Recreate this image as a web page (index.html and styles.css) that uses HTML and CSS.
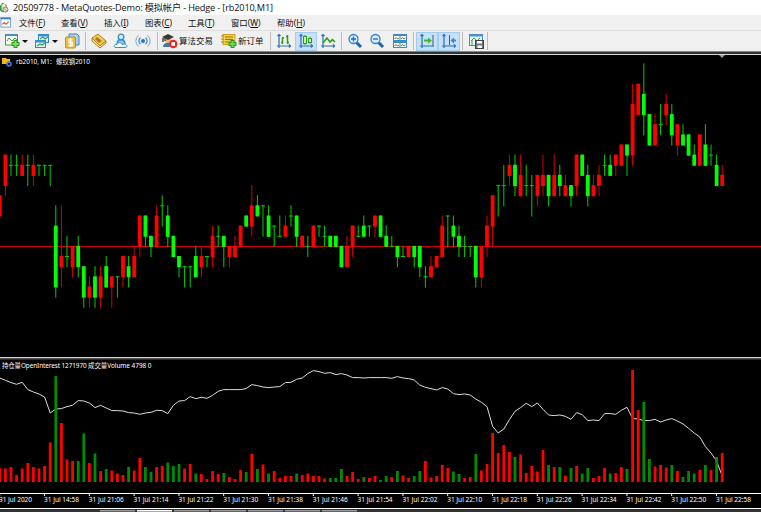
FILE: index.html
```html
<!DOCTYPE html>
<html lang="zh-CN">
<head>
    <meta charset="utf-8">
    <title>20509778 - MetaQuotes-Demo</title>
    <link rel="stylesheet" href="styles.css">
</head>
<body>

<div class="titlebar">
    <svg class="appicon" viewBox="0 0 12 14"><path d="M0 5L3 1l5 3v6l-4 3-4-2z" fill="#3a9c4c"/><path d="M2 4l3-2 3 5-2 5-4-2z" fill="#f5edc0"/><circle cx="6.500" cy="9.500" r="3" fill="#cfe6f5" stroke="#287dba"/><path d="M4 7l5 5" stroke="#c98a10"/></svg>
    <span class="title">20509778 - MetaQuotes-Demo: 模拟帐户 - Hedge - [rb2010,M1]</span>
</div>

<div class="menubar">
    <svg class="menuicon" viewBox="0 0 12 12"><rect x=".5" y="1" width="10.500" height="10" fill="#fff" stroke="#5b9fd6"/><path d="M0 1.500h11" stroke="#3282cc" stroke-width="2"/><path d="M2 8l2-2 2 2 3-3" fill="none" stroke="#e8402a" stroke-width="1.200"/></svg>
    <span>文件(<u>F</u>)</span>
    <span>查看(<u>V</u>)</span>
    <span>插入(<u>I</u>)</span>
    <span>图表(<u>C</u>)</span>
    <span>工具(<u>T</u>)</span>
    <span>窗口(<u>W</u>)</span>
    <span>帮助(<u>H</u>)</span>
</div>

<div class="toolbar">
    <div class="tool first"><svg viewBox="0 0 16 16"><rect x="1.500" y="2" width="12" height="10" fill="#f5fbf2" stroke="#4b9a3c"/><path d="M1 2h13" stroke="#2e7fc2" stroke-width="1.500"/><path d="M3 8l2-3 3 3 3-3 2 2" fill="none" stroke="#4b9a3c"/><path d="M11.500 7v8M7.500 11h8" stroke="#2b9a22" stroke-width="4"/><path d="M11.500 8v6M8.500 11h6" stroke="#7ddb62" stroke-width="2"/></svg></div>
    <div class="caret"></div>
    <div class="tool"><svg viewBox="0 0 16 16"><rect x="4.500" y="1.500" width="10" height="8" fill="#e4f2fb" stroke="#3585c6"/><path d="M4 2.500h11" stroke="#3a8ed4" stroke-width="2"/><rect x="1.500" y="7.500" width="10" height="7" fill="#dff0fb" stroke="#3585c6"/><path d="M1 8.500h11" stroke="#3a8ed4" stroke-width="2"/><path d="M6 6l3-2 2 2 3-2M3 13l3-2 2 1 3-2" fill="none" stroke="#35a43b" stroke-width="1.200"/></svg></div>
    <div class="caret"></div>
    <div class="tool"><svg viewBox="0 0 16 16"><path d="M5 1h8l2 2v9H5z" fill="#a9d3f2" stroke="#3b83bd"/><rect x="1.500" y="4" width="10" height="11" rx="1" fill="#f2be38" stroke="#c98b13"/><path d="M8.500 6.500H5v3h3.500v3H4.500M6.700 5v9" fill="none" stroke="#fff" stroke-width="1.300"/></svg></div>
    <div class="sep"></div>
    <div class="tool"><svg viewBox="0 0 16 16"><path d="M1 5l6-4 8 7-6 5z" fill="#f2cb4f" stroke="#b98416"/><path d="M1 5v3l8 7 6-5V8l-6 5z" fill="#fff0b6" stroke="#a8781e"/><path d="M6 4l5 4-3 2-4-4z" fill="#a77a27"/></svg></div>
    <div class="tool"><svg viewBox="0 0 16 16"><path d="M4 11c0-6 8-6 8 0" fill="#8cc4ee" stroke="#348dd2" stroke-width="1.300"/><circle cx="8" cy="4" r="2.800" fill="#d8eefc" stroke="#348dd2" stroke-width="1.300"/><path d="M3 14.500c-3 0-2-4 1-3 1-3 5-2 5 0 4-2 7 3 3 3z" fill="#eef8fe" stroke="#348dd2"/></svg></div>
    <div class="tool"><svg viewBox="0 0 16 16" fill="none" stroke="#3b86d0"><circle cx="8" cy="8" r="1.700" fill="#2877c5"/><path d="M5.500 4.800a4 4 0 0 0 0 6.400M10.500 4.800a4 4 0 0 1 0 6.400" stroke-width="1.200"/><path d="M3.500 2.500a7 7 0 0 0 0 11M12.500 2.500a7 7 0 0 1 0 11" stroke="#7ca5cc"/></svg></div>
    <div class="sep wide"></div>
    <div class="tool algo"><svg viewBox="0 0 16 16"><path d="M1 14c0-6 10-6 10 0z" fill="#397bb5"/><circle cx="6" cy="7" r="3" fill="#efb577"/><path d="M0 4l6-3 6 3-6 3z" fill="#373737"/><path d="M3 5v3M1 5v4" stroke="#494949" stroke-width="1.500"/><circle cx="11.200" cy="11" r="4.300" fill="#e22b20"/><rect x="9.400" y="9.200" width="3.600" height="3.600" fill="#fff"/></svg><span>算法交易</span></div>
    <div class="tool order"><svg viewBox="0 0 16 16"><rect x="2" y="1.500" width="12" height="10" fill="#f5d24c" stroke="#caa01d"/><path d="M4 4h8M4 6.500h8M4 9h5" stroke="#9a7212"/><path d="M0 3h3M0 6h3M0 9h3" stroke="#a4882d"/><path d="M11.500 7v8M7.500 11h8" stroke="#2b9a22" stroke-width="4"/><path d="M11.500 8v6M8.500 11h6" stroke="#72d455" stroke-width="2"/></svg><span>新订单</span></div>
    <div class="sep"></div>
    <div class="tool"><svg viewBox="0 0 16 16"><path class="axis" d="M3 1v14M1 13h14M1.500 3L3 1.500 4.500 3M13 11.500l1.500 1.500-1.500 1.500"/><path d="M6.500 4v7M5 9.500h1.500M6.500 5H8M11.500 2v9M10 3.500h1.500M11.500 9.500H13" class="green"/></svg></div>
    <div class="tool active"><svg viewBox="0 0 16 16"><path class="axis" d="M3 1v14M1 13h14M1.500 3L3 1.500 4.500 3M13 11.500l1.500 1.500-1.500 1.500"/><path d="M7 2v10M12 4v7" class="thin"/><rect x="5.500" y="3.500" width="3" height="7" fill="#c9f4b7" stroke="#2c9c23"/><rect x="10.500" y="5.500" width="3" height="4" fill="#c9f4b7" stroke="#2c9c23"/></svg></div>
    <div class="tool"><svg viewBox="0 0 16 16"><path class="axis" d="M3 1v14M1 13h14M1.500 3L3 1.500 4.500 3M13 11.500l1.500 1.500-1.500 1.500"/><path d="M3 10l4-5 3 4 2.500-2.500 2.500 2.500" class="green"/></svg></div>
    <div class="sep"></div>
    <div class="tool"><svg viewBox="0 0 16 16"><path d="M9.500 9.500l4.500 4.500" stroke="#1e61ad" stroke-width="3"/><circle cx="6.500" cy="6" r="4.500" fill="#d7edfc" stroke="#3483cb" stroke-width="1.300"/><path d="M4 6h5M6.500 3.500v5" stroke="#2368b0" stroke-width="1.300"/></svg></div>
    <div class="tool"><svg viewBox="0 0 16 16"><path d="M9.500 9.500l4.500 4.500" stroke="#1e61ad" stroke-width="3"/><circle cx="6.500" cy="6" r="4.500" fill="#d7edfc" stroke="#3483cb" stroke-width="1.300"/><path d="M4 6h5" stroke="#2368b0" stroke-width="1.300"/></svg></div>
    <div class="tool tile"><svg viewBox="0 0 16 16"><rect x="1" y="1" width="14" height="14" fill="#3f88c9"/><path d="M2 3h5.500v4H2zM8.500 3H14v4H8.500zM2 10h5.500v4H2zM8.500 10H14v4H8.500z" fill="#fff"/><path d="M2.500 6L4 4.500 5.500 6 7 5M9 6l1.500-1.500L12 6l1.500-1M2.500 13L4 11.500 5.500 13 7 12M9 13l1.500-1.500L12 13l1.500-1" fill="none" stroke="#32912b"/></svg></div>
    <div class="sep"></div>
    <div class="tool active"><svg viewBox="0 0 16 16"><path class="axis" d="M3 1v14M1 13h14M1.500 3L3 1.500 4.500 3"/><path d="M14 2v11" stroke="#4c5966"/><path d="M5 6.500h4V4.500L13 7.500l-4 3V8.500H5z" fill="#3db52d"/></svg></div>
    <div class="tool active"><svg viewBox="0 0 16 16"><path class="axis" d="M3 1v14M1 13h14M1.500 3L3 1.500 4.500 3M13 11.500l1.500 1.500-1.500 1.500"/><path d="M8.500 2v10" stroke="#4c5966"/><path d="M15 6.500h-2V4.500L9.500 7.500l3.500 3V8.500h2z" fill="#3c87d0"/></svg></div>
    <div class="sep"></div>
    <div class="tool"><svg viewBox="0 0 16 16"><rect x="1.500" y="1.500" width="13" height="11" fill="#e5f3fa" stroke="#468ac2"/><path d="M1 2.500h14" stroke="#4d94cf" stroke-width="2"/><path d="M3 8l3-3 3 3 3-3M4 7v5" fill="none" stroke="#46a43d"/><rect x="7.500" y="7.500" width="8" height="8" fill="#6e757d" stroke="#3c4248"/><path d="M9 8h5v2.500H9zM9.500 12.500H14V15H9.500z" fill="#fff"/></svg></div>
    <div class="sep last"></div>
</div>

<div class="chart">
    <div class="chart-head">
        <svg viewBox="0 0 10 10"><path d="M0 1h4l1 1h3v5H0z" fill="#f5b91b"/><circle cx="7" cy="7" r="2" fill="#152538" stroke="#3d82d8" stroke-width="1.500"/></svg>
        <span class="symbol">rb2010, M1:</span><span>螺纹钢2010</span>
    </div>
    <div class="sub-head">
        <span class="oi">持仓量OpenInterest 1271970</span><span>成交量Volume 4798 0</span>
    </div>
    <svg id="plot" width="761" height="453" viewBox="0 55 761 453"></svg>
</div>

<div class="tabs">
    <i></i><i class="on"></i><i></i><i></i><i></i><i></i><i></i>
</div>

<script src="chart.js"></script>
</body>
</html>
```
FILE: styles.css
```css
body {
    margin: 0;
    width: 761px;
    height: 512px;
    overflow: hidden;
    background: #000;
    font-family: "Noto Sans", "Noto Sans CJK SC", sans-serif;
    color: #111;
}
.titlebar {
    display: flex;
    align-items: center;
    height: 15px;
    background: #fff;
}
.appicon {
    width: 10px;
    height: 13px;
}
.title {
    margin-left: 3px;
    font-family: "Open Sans", "Noto Sans CJK SC", sans-serif;
    font-size: 9.2px;
    letter-spacing: -0.16px;
    line-height: 15px;
    white-space: nowrap;
}
.menubar {
    display: grid;
    grid-template-columns: 19px 42px 43px 41px 43px 43px 46px 60px;
    align-items: center;
    height: 15px;
    background: #f0f0f0;
    font-size: 8.4px;
    line-height: 14px;
    white-space: nowrap;
}
.menuicon {
    width: 12px;
    height: 11px;
}
.toolbar {
    display: flex;
    align-items: center;
    height: 22px;
    background: #f0f0f0;
    border-bottom: 1px solid #888;
    border-top: 1px solid #dcdcdc;
    box-sizing: border-box;
}
.tool {
    display: flex;
    flex: none;
    align-items: center;
    justify-content: center;
    box-sizing: border-box;
    width: 22px;
    height: 19px;
    white-space: nowrap;
}
.tool svg {
    width: 16px;
    height: 16px;
    flex: none;
}
.tool.first {
    margin-left: 1px;
}
.tool.active {
    background: #c5e0f7;
    border: 1px solid #a3cdf0;
}
.tool.tile {
    width: 23px;
}
.tool.algo {
    width: 57px;
    justify-content: flex-start;
    padding-left: 1px;
}
.tool.order {
    width: 50px;
    justify-content: flex-start;
    padding-left: 3px;
}
.tool span {
    margin-left: 1px;
    font-size: 8.5px;
    line-height: 18px;
}
.axis {
    fill: none;
    stroke: #2b70b7;
    stroke-width: 1.2;
}
.green {
    fill: none;
    stroke: #2c9c23;
    stroke-width: 1.5;
}
.thin {
    stroke: #2c9c23;
}
.caret {
    width: 0;
    height: 0;
    margin: 0 3px 0 -1px;
    border: 3px solid transparent;
    border-top: 3px solid #111;
    border-bottom: 0;
}
.sep {
    flex: none;
    width: 1px;
    height: 18px;
    margin: 0 2px;
    background: #bcbcbc;
}
.sep.wide {
    margin: 0 3px;
}
.sep.last {
    margin-left: 0;
}
.chart {
    position: relative;
    height: 453px;
    border-top: 1px solid #d8d8d8;
    box-shadow: 0 -2px 0 #2e3330;
    margin-top: 2px;
    background: #000;
    color: #fff;
}
#plot {
    display: block;
}
.chart-head, .sub-head {
    position: absolute;
    left: 2px;
    display: flex;
    align-items: center;
    height: 10px;
    font-size: 6.4px;
    line-height: 10px;
    white-space: nowrap;
}
.chart-head {
    top: 2px;
}
.chart-head svg {
    width: 10px;
    height: 10px;
}
.symbol {
    margin-left: 4px;
    width: 40px;
}
.sub-head {
    top: 306px;
}
.oi {
    width: 86px;
    letter-spacing: -0.08px;
}
.time {
    font-family: "Noto Sans", sans-serif;
    font-size: 6.6px;
    fill: #fff;
}
.tabs {
    display: flex;
    gap: 2px;
    height: 3px;
    padding-left: 100px;
    border-top: 1px solid #fff;
    background: #333;
}
.tabs i {
    width: 35px;
    height: 3px;
    margin-top: 1px;
    background: #666;
    border-top: 1px solid #999;
    box-sizing: border-box;
}
.tabs .on {
    background: #aaa;
    border-color: #fff;
}
```
FILE: chart.js
```js
// color, high, body top, body bottom, low (in price steps from the red line)
const candles = `R 5 5 3 3,R 9 9 6 5,G 9 8 8 7,G 9 8 8 7,R 9 8 7 7,G 9 8 8 6,R 9 8 7 6,G 8 8 8 7,G 8 8 8 7,G 8 8 8 6,
G 4 2 -4 -5,R 4 -1 -2 -4,G 1 -1 -1 -2,R 0 0 -2 -3,G 1 0 -2 -3,G -2 -2 -5 -6,R -3 -4 -5 -6,G -2 -3 -5 -6,R -2 -3 -5 -6,G -1 -2 -4 -4,
R -3 -3 -4 -6,G -3 -3 -3 -5,R -1 -1 -3 -4,G -1 -2 -3 -4,R 0 -1 -3 -3,R 3 3 0 -1,G 3 3 1 0,G 1 1 0 -1,R 4 3 0 0,G 5 4 4 2,
G 4 3 1 0,G 1 1 -1 -1,G -1 -1 -2 -3,G -2 -2 -2 -4,G -2 -2 -2 -4,G 0 -1 -3 -3,R 0 -1 -2 -3,G -1 -1 -1 -2,R 2 1 -1 -2,G 2 1 1 0,
G 1 1 0 -2,R 0 0 -1 -2,R 1 0 -1 -1,R 2 2 0 0,G 3 3 2 2,R 6 4 2 1,G 5 4 3 3,G 4 4 4 1,G 4 3 1 1,G 2 2 2 0,
G 3 1 1 1,R 3 2 1 1,G 4 3 3 2,G 3 3 1 0,R 1 1 0 0,G 1 0 0 -1,R 2 2 0 0,G 2 2 2 1,G 2 1 1 0,G 1 1 0 0,
G 1 1 0 0,G 0 0 -2 -2,R 1 0 -2 -2,R 2 2 0 -1,G 2 1 1 1,G 3 2 1 1,G 2 2 2 1,R 3 3 2 1,G 3 3 1 1,G 2 1 0 0,
G 1 0 0 0,G 0 0 -1 -2,G 0 -1 -1 -1,R 0 0 -1 -1,G 0 0 -1 -2,G 0 0 -2 -3,G -2 -3 -3 -4,R -1 -2 -3 -3,R -1 -1 -2 -2,R 3 2 -1 -1,
G 3 3 3 0,G 3 2 1 0,G 2 1 0 -1,G 1 0 0 -1,G 0 0 0 -1,G 0 0 -3 -4,R 0 0 -3 -4,R 3 2 0 -1,R 5 5 2 0,G 6 6 6 3,
G 8 6 6 4,R 9 8 7 6,G 9 8 6 5,R 9 7 5 5,G 8 6 6 5,G 7 6 6 3,R 7 7 5 4,R 9 7 6 5,G 7 7 5 4,R 9 7 5 5,
G 8 7 6 5,R 7 6 5 5,G 6 6 5 4,R 9 9 6 5,G 9 9 7 7,G 8 7 5 4,R 7 6 5 5,R 8 7 6 5,G 9 8 8 7,G 9 8 7 7,
R 9 9 8 7,R 10 10 8 8,G 10 10 9 7,R 16 14 9 8,R 16 16 13 13,G 18 15 13 11,G 13 13 10 10,R 13 12 10 10,G 14 12 12 11,R 15 14 13 12,
G 14 13 11 10,R 12 12 10 9,G 12 11 10 10,G 11 11 9 9,G 10 9 8 8,R 11 11 8 8,G 12 10 8 8,G 10 9 9 8,G 9 8 6 6,R 8 7 6 6`.split(',');

const volumes = `R14 R13.5 R15 R7 R13.5 R19 R15 R13.5 R16 R39.5 G106 R59 R22.5 R21 G21 G48.5 R19 G28.5 R11 G13
R11.5 R8.5 R7 G15 R11.5 R24 G15 G10 R15 R16 G19.5 G16 G18 R13.5 R18 G8.5 R8 R3 R11 R8
G9 R5 R3 R12 G10 R28 G13 R17.5 G8.5 R11 R4 R6 R6 G8.5 R7 R8.5 R6 R6 R3.5 G4
G4 G13 R6 R10 R3 G5 R4 R6 G2 G6 R5 G11 R6.5 R4 G6 G11 R21 R4.5 R6 R17
R14 G10.5 G8 R4 R5 G28 R11.5 R18 R49 R29 R37 R30 G25 R27.5 R9 R16 R10.5 R32 G17 R15
G15 R6.5 G14 R16 G8.5 G14 R4 R6 R14 G8.5 R9 R15 G13 R112 R72 G80 G23 R15.5 R17 R14.5
G17 R11 G5 G11 G8.5 R12 G17 R12 G25 R29`.split(/\s+/);

// open interest, in thirds of a pixel below y=350
const interest = [83,90,97,102,96,118,125,131,140,188,176,175,169,165,151,152,158,172,165,173,
    181,181,182,187,188,192,188,186,180,181,190,165,152,151,139,145,141,144,135,123,
    118,118,118,118,115,103,106,110,112,110,109,97,96,87,83,70,61,64,69,67,
    73,70,74,82,82,83,82,82,82,82,84,79,83,85,89,104,111,115,119,112,
    116,130,133,131,134,146,156,169,228,248,236,208,183,172,159,169,158,177,194,196,
    194,198,207,187,193,211,209,211,190,190,192,180,171,205,206,211,211,207,215,209,
    205,212,221,234,248,260,289,308,332,377];

const times = ['31 Jul 2020', '14:58', '21:06', '21:14', '21:22', '21:30', '21:38', '21:46', '21:54',
    '22:02', '22:10', '22:18', '22:26', '22:34', '22:42', '22:50', '22:58'];

const px = i => -0.2 + 5.6 * i;
const py = n => 246.4 - 10.14 * n;
const rect = (x, y, w, h, c) => `<rect x="${x.toFixed(1)}" y="${y.toFixed(1)}" width="${w}" height="${h.toFixed(1)}" fill="${c}"/>`;

let out = rect(0, 246, 761, 1, '#d00000');

candles.forEach((row, i) => {
    const [c, hi, top, bot, lo] = row.trim().split(' ');
    const body = c === 'R' ? '#ff0000' : '#00ff00';
    const wick = c === 'R' ? '#d80000' : '#00d000';
    const x = px(i);
    out += rect(x - 0.5, py(hi) - 0.5, 1, py(lo) - py(hi) + 1, wick);
    if (top === bot) {
        out += rect(x - 2, py(top) - 0.5, 4, 1, '#00d000');
    } else {
        out += rect(x - 1.9, py(top) - 0.5, 3.8, py(bot) - py(top) + 1, body);
    }
});

// panel divider
out += rect(0, 357, 761, 1, '#d4d4d4') + rect(0, 358, 761, 1.5, '#555');

const points = interest.map((v, i) => `${px(i).toFixed(1)},${(350.3 + v / 3).toFixed(1)}`).join(' ');
out += `<polyline points="${points}" fill="none" stroke="#ddd" stroke-width="1"/>`;

volumes.forEach((v, i) => {
    const h = Number(v.slice(1));
    out += rect(px(i) - 1.4, 482 - h, 2.8, h, v[0] === 'R' ? '#ff0000' : '#008c00');
});

out += rect(0, 493, 761, 1, '#fff');
times.forEach((t, i) => {
    const x = 44.5 + (i - 1) * 44.8;
    out += rect(x - 0.5, 493, 1, 3, '#fff');
    const label = i ? '31 Jul ' + t : t;
    out += `<text class="time" x="${i ? x - 0.5 : -1}" y="502" textLength="${i ? 35 : 33}" lengthAdjust="spacingAndGlyphs">${label}</text>`;
});

// shift marker on the top edge
out += '<path d="M719 55h6l-3 3z" fill="#8e9cab"/>';

document.getElementById('plot').innerHTML = out;
```
